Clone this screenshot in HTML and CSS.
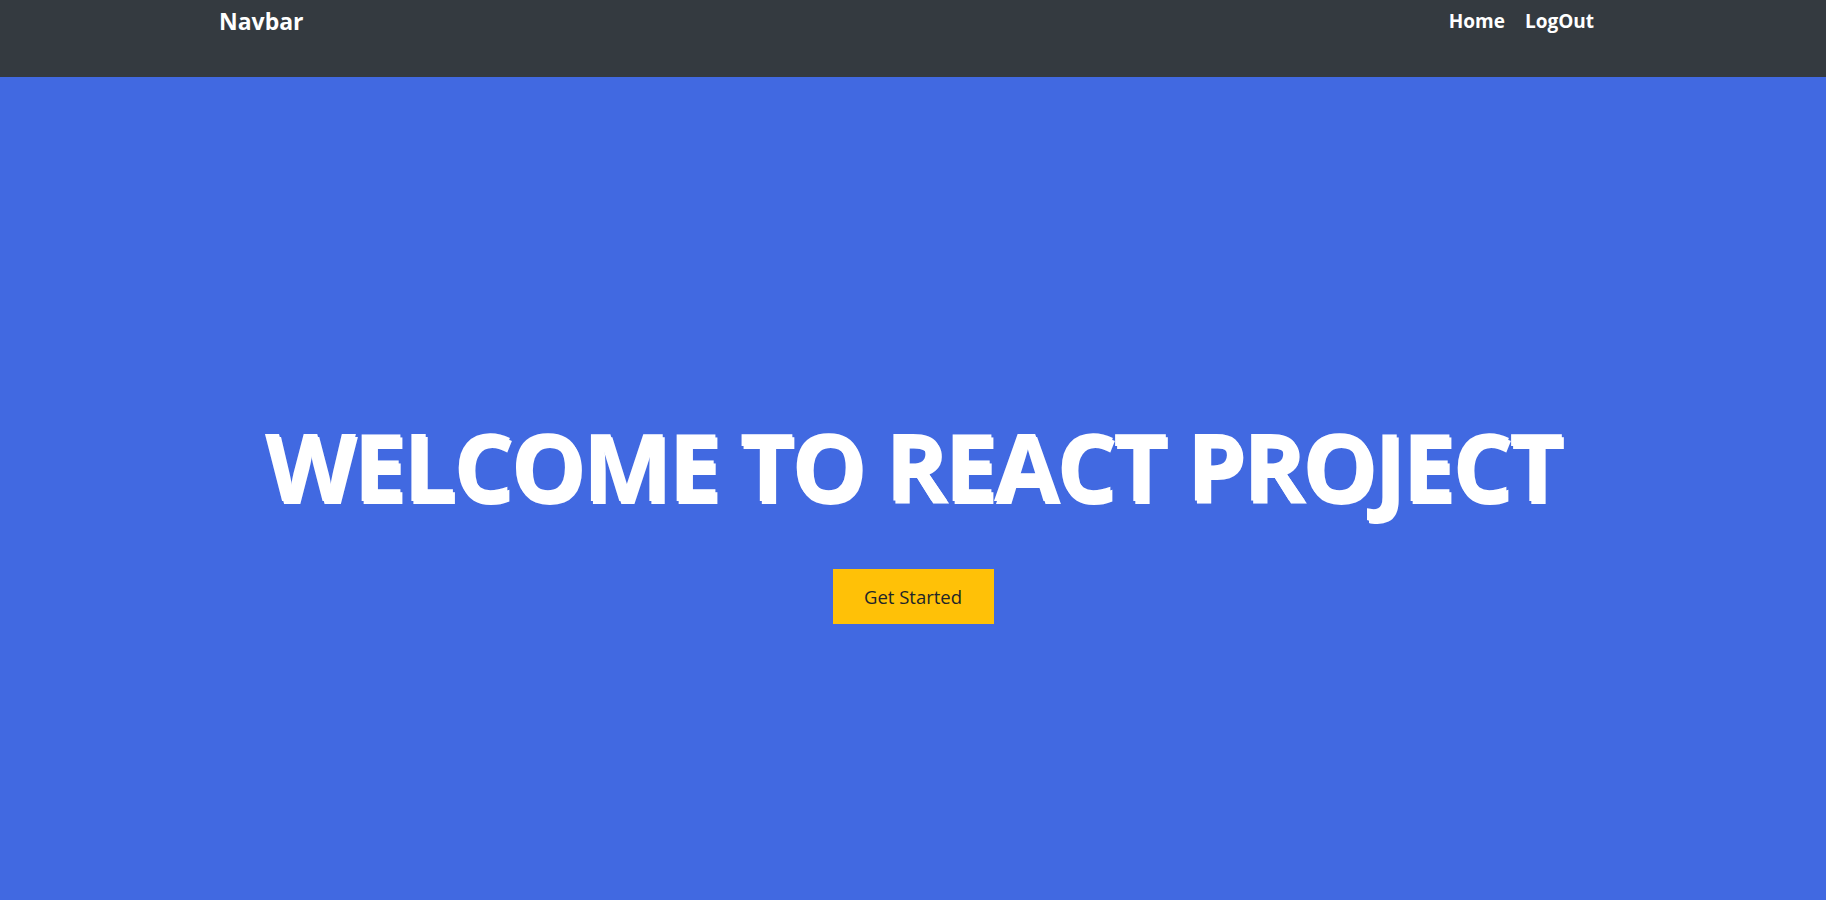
FILE: index.html
```html
<!DOCTYPE html>
<html lang="en">
<head>
<meta charset="utf-8">
<title>React Project</title>
<link rel="stylesheet" href="styles.css">
</head>
<body>
<nav class="navbar">
  <div class="nav-inner">
    <a class="brand" href="#">Navbar</a>
    <div class="links">
      <a class="link" href="#">Home</a>
      <a class="link" href="#">LogOut</a>
    </div>
  </div>
</nav>
<main class="hero">
  <h1 class="title">WELCOME TO REACT PROJECT</h1>
  <button class="cta">Get Started</button>
</main>
</body>
</html>
```
FILE: styles.css
```css
* { box-sizing: border-box; }
html, body { margin: 0; padding: 0; }
body {
  font-family: "Open Sans", "Noto Sans", sans-serif;
  background: #4169e1;
  height: 900px;
  display: flex;
  flex-direction: column;
}
.navbar {
  background: #343a40;
  height: 77px;
  flex: none;
}
.nav-inner {
  padding: 0 232px 0 219px;
  display: flex;
  justify-content: space-between;
  align-items: flex-start;
}
.brand {
  color: #fff;
  text-decoration: none;
  font-weight: 700;
  font-size: 23px;
  line-height: 42px;
}
.links {
  display: flex;
  gap: 20px;
  padding-top: 5px;
}
.link {
  color: #fff;
  text-decoration: none;
  font-weight: 700;
  font-size: 19px;
  line-height: 32px;
}
.hero {
  flex: 1;
  display: flex;
  flex-direction: column;
  align-items: center;
  justify-content: center;
  padding-top: 56px;
}
.title {
  margin: 0;
  color: #fff;
  font-size: 94px;
  font-weight: 700;
  line-height: 1.2;
  text-shadow: 2px 3px 0 #fff;
  letter-spacing: -2.8px;
}
.cta {
  margin-top: 48px;
  width: 161px;
  height: 55px;
  border: none;
  background: #ffc107;
  color: #212529;
  font-family: inherit;
  font-size: 18.5px;
}
```
